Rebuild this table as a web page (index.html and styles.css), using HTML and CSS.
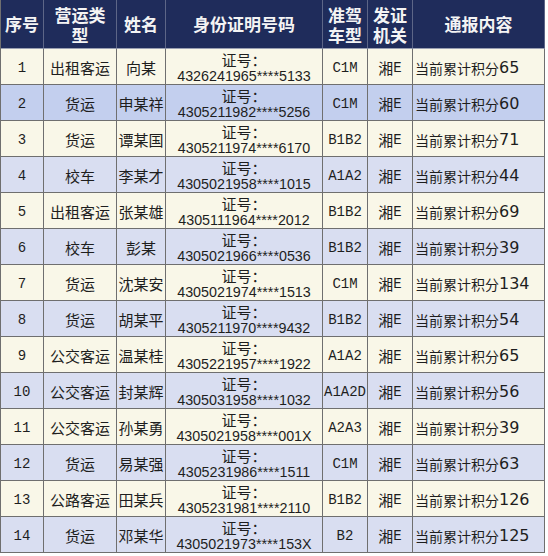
FILE: index.html
```html
<!DOCTYPE html>
<html lang="zh">
<head>
<meta charset="utf-8">
<title>通报</title>
<link rel="stylesheet" href="styles.css">
</head>
<body>
<div class="sheet">
  <div class="hd">序号</div>
  <div class="hd two"><span class="ln">营运类</span><span class="ln">型</span></div>
  <div class="hd">姓名</div>
  <div class="hd">身份证明号码</div>
  <div class="hd two"><span class="ln">准驾</span><span class="ln">车型</span></div>
  <div class="hd two"><span class="ln">发证</span><span class="ln">机关</span></div>
  <div class="hd">通报内容</div>

  <div class="c n odd">1</div><div class="c t odd">出租客运</div><div class="c t odd">向某</div><div class="c id odd"><span class="lbl">证号：</span><span class="num">4326241965****5133</span></div><div class="c n odd">C1M</div><div class="c t odd">湘<span class="e">E</span></div><div class="c rep odd">当前累计积分<span class="pts">65</span></div>

  <div class="c n sel">2</div><div class="c t sel">货运</div><div class="c t sel">申某祥</div><div class="c id sel"><span class="lbl">证号：</span><span class="num">4305211982****5256</span></div><div class="c n sel">C1M</div><div class="c t sel">湘<span class="e">E</span></div><div class="c rep sel">当前累计积分<span class="pts">60</span></div>

  <div class="c n odd">3</div><div class="c t odd">货运</div><div class="c t odd">谭某国</div><div class="c id odd"><span class="lbl">证号：</span><span class="num">4305211974****6170</span></div><div class="c n odd">B1B2</div><div class="c t odd">湘<span class="e">E</span></div><div class="c rep odd">当前累计积分<span class="pts">71</span></div>

  <div class="c n even">4</div><div class="c t even">校车</div><div class="c t even">李某才</div><div class="c id even"><span class="lbl">证号：</span><span class="num">4305021958****1015</span></div><div class="c n even">A1A2</div><div class="c t even">湘<span class="e">E</span></div><div class="c rep even">当前累计积分<span class="pts">44</span></div>

  <div class="c n odd">5</div><div class="c t odd">出租客运</div><div class="c t odd">张某雄</div><div class="c id odd"><span class="lbl">证号：</span><span class="num">4305111964****2012</span></div><div class="c n odd">B1B2</div><div class="c t odd">湘<span class="e">E</span></div><div class="c rep odd">当前累计积分<span class="pts">69</span></div>

  <div class="c n even">6</div><div class="c t even">校车</div><div class="c t even">彭某</div><div class="c id even"><span class="lbl">证号：</span><span class="num">4305021966****0536</span></div><div class="c n even">B1B2</div><div class="c t even">湘<span class="e">E</span></div><div class="c rep even">当前累计积分<span class="pts">39</span></div>

  <div class="c n odd">7</div><div class="c t odd">货运</div><div class="c t odd">沈某安</div><div class="c id odd"><span class="lbl">证号：</span><span class="num">4305021974****1513</span></div><div class="c n odd">C1M</div><div class="c t odd">湘<span class="e">E</span></div><div class="c rep odd">当前累计积分<span class="pts">134</span></div>

  <div class="c n even">8</div><div class="c t even">货运</div><div class="c t even">胡某平</div><div class="c id even"><span class="lbl">证号：</span><span class="num">4305211970****9432</span></div><div class="c n even">B1B2</div><div class="c t even">湘<span class="e">E</span></div><div class="c rep even">当前累计积分<span class="pts">54</span></div>

  <div class="c n odd">9</div><div class="c t odd">公交客运</div><div class="c t odd">温某桂</div><div class="c id odd"><span class="lbl">证号：</span><span class="num">4305221957****1922</span></div><div class="c n odd">A1A2</div><div class="c t odd">湘<span class="e">E</span></div><div class="c rep odd">当前累计积分<span class="pts">65</span></div>

  <div class="c n even">10</div><div class="c t even">公交客运</div><div class="c t even">封某辉</div><div class="c id even"><span class="lbl">证号：</span><span class="num">4305031958****1032</span></div><div class="c n even">A1A2D</div><div class="c t even">湘<span class="e">E</span></div><div class="c rep even">当前累计积分<span class="pts">56</span></div>

  <div class="c n odd">11</div><div class="c t odd">公交客运</div><div class="c t odd">孙某勇</div><div class="c id odd"><span class="lbl">证号：</span><span class="num">4305021958****001X</span></div><div class="c n odd">A2A3</div><div class="c t odd">湘<span class="e">E</span></div><div class="c rep odd">当前累计积分<span class="pts">39</span></div>

  <div class="c n even">12</div><div class="c t even">货运</div><div class="c t even">易某强</div><div class="c id even"><span class="lbl">证号：</span><span class="num">4305231986****1511</span></div><div class="c n even">C1M</div><div class="c t even">湘<span class="e">E</span></div><div class="c rep even">当前累计积分<span class="pts">63</span></div>

  <div class="c n odd">13</div><div class="c t odd">公路客运</div><div class="c t odd">田某兵</div><div class="c id odd"><span class="lbl">证号：</span><span class="num">4305231981****2110</span></div><div class="c n odd">B1B2</div><div class="c t odd">湘<span class="e">E</span></div><div class="c rep odd">当前累计积分<span class="pts">126</span></div>

  <div class="c n even">14</div><div class="c t even">货运</div><div class="c t even">邓某华</div><div class="c id even"><span class="lbl">证号：</span><span class="num">4305021973****153X</span></div><div class="c n even">B2</div><div class="c t even">湘<span class="e">E</span></div><div class="c rep even">当前累计积分<span class="pts">125</span></div>
</div>
</body>
</html>
```
FILE: styles.css
```css
html, body {
  margin: 0;
  padding: 0;
  background: #ffffff;
}

.sheet {
  display: grid;
  grid-template-columns: 43px 73px 49px 157px 45px 45px 132px;
  grid-template-rows: 49px;
  grid-auto-rows: 36px;
  width: 545px;
  box-sizing: border-box;
  border-left: 1px solid #6f6f6f;
  color: #1e1e1e;
  font-family: "Noto Sans CJK SC", sans-serif;
}

.hd {
  display: flex;
  align-items: center;
  justify-content: center;
  text-align: center;
  background: #1f2c5b;
  color: #f4f4f4;
  font-size: 17px;
  font-weight: bold;
  line-height: 20px;
  border-right: 1px solid #5d6687;
  border-bottom: 1px solid #9aa0b2;
  box-sizing: border-box;
}

.hd.two {
  flex-direction: column;
  padding-top: 1px;
}

.ln {
  display: block;
  line-height: 20px;
}

.c {
  display: flex;
  align-items: center;
  justify-content: center;
  box-sizing: border-box;
  border-right: 1px solid #6f6f6f;
  border-bottom: 1px solid #6f6f6f;
  white-space: nowrap;
  overflow: visible;
}

.odd { background: #f9f7e8; }
.even { background: #d9def1; }
.sel { background: #c3cfee; }

.n {
  font-family: "Liberation Mono", monospace;
  font-size: 14px;
  padding-top: 2px;
}

.t {
  font-size: 15px;
  padding-top: 2px;
}

.e {
  font-family: "Liberation Mono", monospace;
  font-size: 14px;
}

.id {
  flex-direction: column;
  justify-content: flex-start;
  padding-top: 2px;
}

.lbl {
  display: block;
  line-height: 17px;
  font-size: 15px;
}

.num {
  display: block;
  line-height: 17px;
  font-family: "Liberation Sans", Arial, sans-serif;
  font-size: 14.3px;
}

.rep {
  justify-content: flex-start;
  padding-left: 2px;
  padding-top: 2px;
  font-size: 14px;
}

.pts {
  font-family: "DejaVu Sans", sans-serif;
  font-size: 16px;
}
```
